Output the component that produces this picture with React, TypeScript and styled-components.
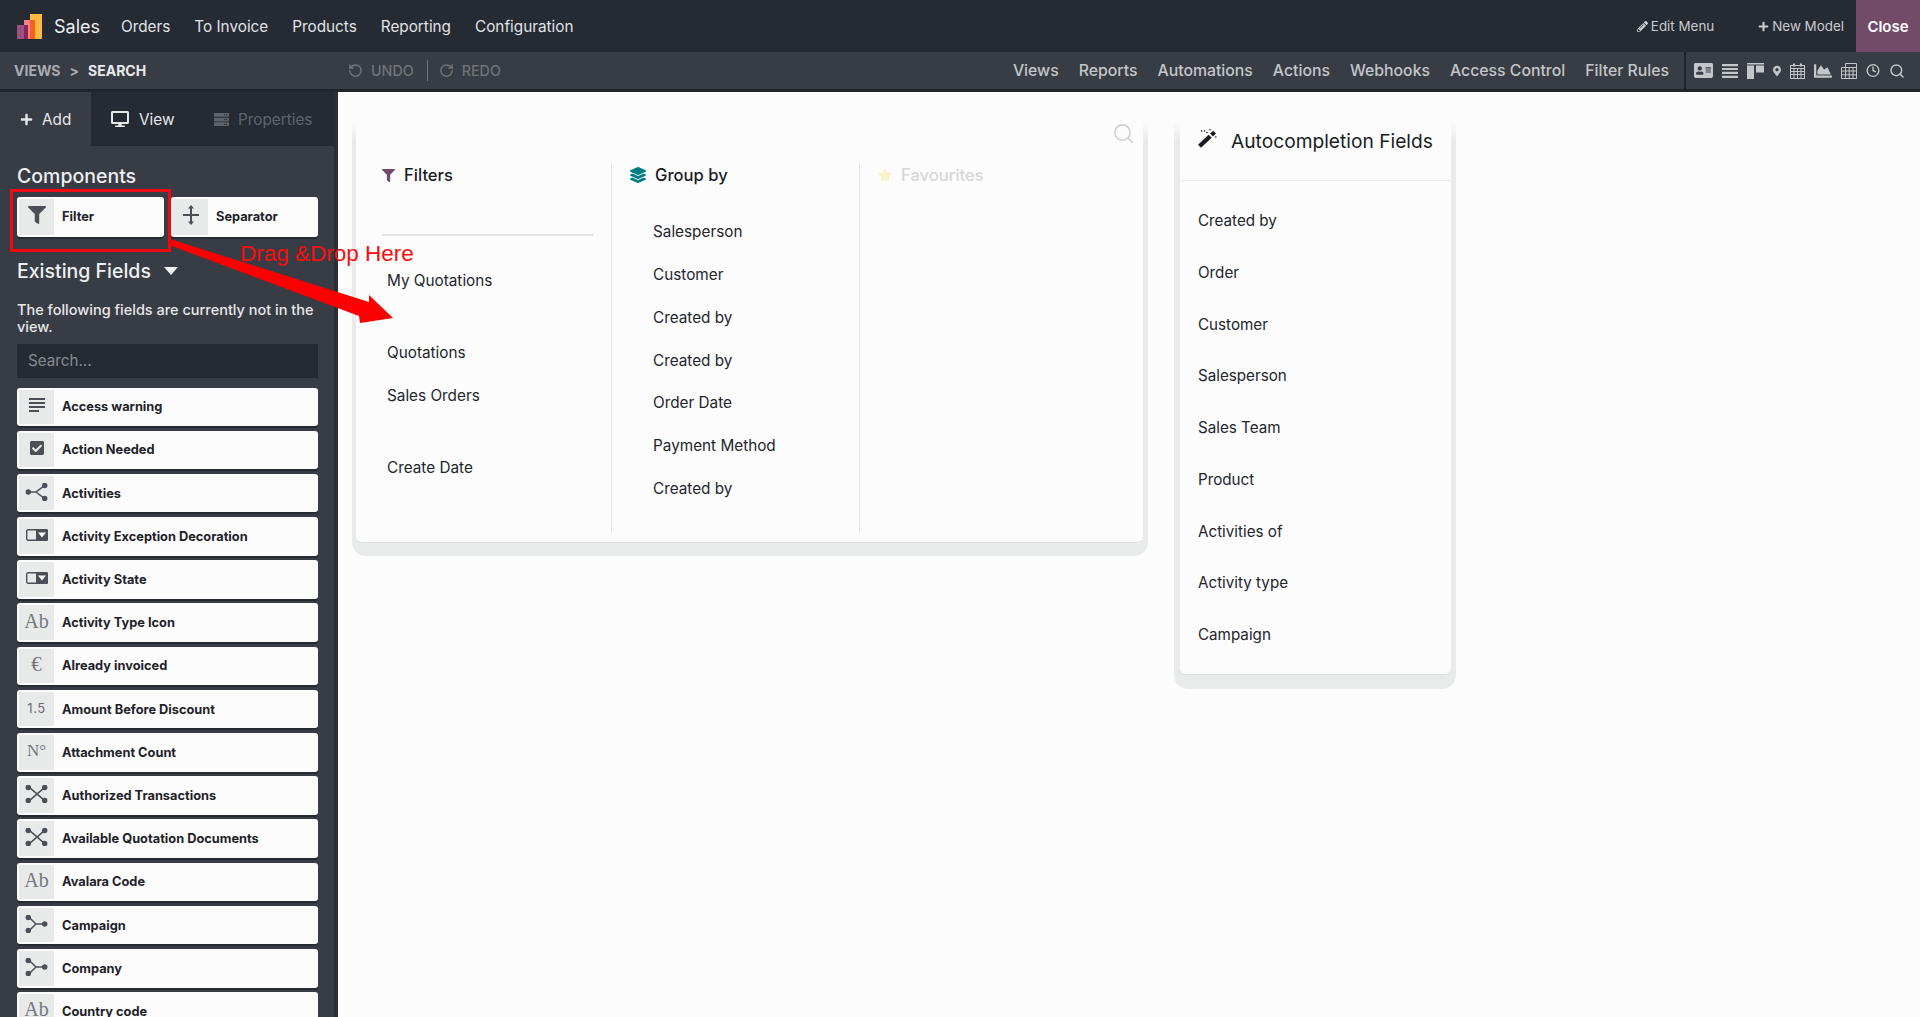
import * as React from 'react';
import styled, { createGlobalStyle } from 'styled-components';
import {
  FaAddressCard, FaCheckSquare, FaChartArea, FaDesktop, FaFilter,
  FaLayerGroup, FaMapMarkerAlt, FaPencilAlt, FaPlus, FaServer, FaStar,
} from 'react-icons/fa';
import { Clock, RotateCcw, RotateCw, Search } from 'lucide-react';

const GlobalStyle = createGlobalStyle`
  html, body { margin: 0; padding: 0; height: 100%; overflow: hidden; }
  body { font-family: Inter, "Noto Sans", sans-serif; background: #fcfcfc; color: #1f2229; }
  * { box-sizing: border-box; }
`;

const Page = styled.div`
  position: relative;
  width: 1920px;
  height: 1017px;
  overflow: hidden;
  display: flex;
  flex-direction: column;
`;

const TopBar = styled.header`
  height: 52px;
  flex: none;
  background: #252a33;
  display: flex;
  align-items: center;
  padding-left: 17px;
  color: #e1e3e6;
`;

const Brand = styled.span`
  font-size: 18px;
  margin: 0 21px 0 12px;
  color: #eceef0;
`;

const MenuLink = styled.span`
  font-size: 15.3px;
  margin-right: 24px;
`;

const Spacer = styled.div`
  flex: 1;
`;

const TopAction = styled.span`
  font-size: 13.4px;
  color: #c9cbcf;
  display: inline-flex;
  align-items: center;
  gap: 3px;
  margin-right: ${p => p.$gap}px;
`;

const CloseButton = styled.div`
  width: 64px;
  height: 52px;
  background: #714b67;
  color: #fff;
  font-size: 15px;
  font-weight: 600;
  display: flex;
  align-items: center;
  justify-content: center;
`;

const SubBar = styled.div`
  height: 40px;
  flex: none;
  background: #383c44;
  border-bottom: 3px solid #20252c;
  display: flex;
  align-items: center;
  padding-left: 14px;
`;

const Crumbs = styled.div`
  width: 334px;
  font-size: 14px;
  font-weight: 700;
  color: #a9acb0;
  display: flex;
  gap: 9px;
`;

const CrumbActive = styled.span`
  color: #e9eaec;
`;

const HistoryButton = styled.span`
  font-size: 14.3px;
  font-weight: 500;
  color: #6f7378;
  display: inline-flex;
  align-items: center;
  gap: 8px;
`;

const HistoryDivider = styled.span`
  width: 1px;
  height: 21px;
  background: #70747a;
  margin: 0 11px 0 13px;
`;

const ViewLink = styled.span`
  font-size: 15.8px;
  font-weight: 500;
  color: #c4c6c9;
  margin-right: 20px;
`;

const ViewIcons = styled.div`
  height: 37px;
  width: 236px;
  border-left: 2px solid #20252c;
  margin-left: -5px;
  display: flex;
  align-items: center;
  gap: 9px;
  padding-left: 8px;
  color: #c4c6c9;
`;

const IconSlot = styled.span`
  width: ${p => p.$w}px;
  flex: none;
  display: flex;
  justify-content: center;
`;

const Body = styled.div`
  flex: 1;
  display: flex;
  min-height: 0;
`;

const Sidebar = styled.aside`
  width: 338px;
  flex: none;
  background: #383c44;
  border-right: 4px solid #2a2e36;
  overflow: hidden;
`;

const Tabs = styled.div`
  height: 54px;
  background: #252a33;
  display: flex;
`;

const Tab = styled.div`
  height: 54px;
  display: flex;
  align-items: center;
  gap: ${p => p.$gap}px;
  font-size: 15.3px;
  padding-left: ${p => p.$left}px;
  width: ${p => p.$width}px;
  background: ${p => (p.$active ? '#383c44' : 'transparent')};
  color: ${p => (p.$muted ? '#5f646b' : '#e6e7e9')};
`;

const SideContent = styled.div`
  padding: 18px 16px 0 17px;
`;

const SectionTitle = styled.h3`
  margin: 0;
  font-size: 19.5px;
  line-height: 24px;
  font-weight: 500;
  color: #eef0f1;
  display: flex;
  align-items: center;
  gap: 13px;
`;

const ComponentRow = styled.div`
  display: flex;
  gap: 7px;
  margin: 9px 0 22px;
`;

const FieldCard = styled.div`
  height: ${p => (p.$tall ? '39.5px' : '38.6px')};
  flex: ${p => (p.$tall ? '1' : 'none')};
  background: #fcfcfc;
  border-radius: 3px;
  padding: 2px;
  display: flex;
  align-items: stretch;
  box-shadow: 0 2px 0 #262a31;
`;

const FieldIcon = styled.div`
  width: 35px;
  flex: none;
  background: #e8eaea;
  color: #4c5056;
  display: flex;
  align-items: center;
  justify-content: center;
  padding-bottom: 3px;
`;

const SerifGlyph = styled.span`
  font-family: "Liberation Serif", serif;
  font-size: ${p => p.$size}px;
  color: #74787d;
`;

const NumberGlyph = styled.span`
  font-size: 13px;
  color: #6b6f74;
  letter-spacing: 0.5px;
`;

const FieldLabel = styled.span`
  font-size: 12.8px;
  font-weight: 700;
  color: #1f2229;
  margin-left: 8px;
  align-self: center;
`;

const HelpText = styled.p`
  margin: 18px 0 9px;
  font-size: 14.5px;
  line-height: 17px;
  font-weight: 500;
  color: #e7e8ea;
`;

const SearchBox = styled.div`
  height: 34px;
  background: #262a33;
  color: #868a8f;
  font-size: 15.2px;
  display: flex;
  align-items: center;
  padding-left: 11px;
  margin-bottom: 10px;
`;

const FieldList = styled.div`
  display: flex;
  flex-direction: column;
  gap: 4.6px;
`;

const Canvas = styled.main`
  flex: 1;
  background: #fcfcfc;
  display: flex;
  align-items: flex-start;
  gap: 26px;
  padding: 28px 0 0 14px;
`;

const Shell = styled.section`
  position: relative;
  width: ${p => p.$width}px;
  padding: ${p => p.$pad};
  background: linear-gradient(to bottom, #fcfcfc 0, #e9ebea 22px);
  border-radius: 0 0 14px 14px;
`;

const Sheet = styled.div`
  background: #fcfcfc;
  border-radius: 0 0 6px 6px;
  border-bottom: 1px solid #dddfde;
`;

const SearchColumns = styled(Sheet)`
  display: flex;
  padding: 44px 0 10px;
`;

const Column = styled.div`
  width: ${p => p.$width}px;
  height: 368px;
  padding-left: ${p => p.$left}px;
  border-right: ${p => (p.$last ? 'none' : '1px solid #e6e7e7')};
`;

const ColumnTitle = styled.div`
  height: 22px;
  display: flex;
  align-items: center;
  gap: ${p => p.$gap}px;
  font-size: 16.6px;
  font-weight: 500;
  color: ${p => (p.$faded ? '#d6d7d8' : '#1a1d24')};
`;

const FilterRule = styled.div`
  width: 211px;
  height: 2px;
  background: #e4e5e5;
  margin: 48px 0 23px;
`;

const GroupList = styled.div`
  margin-top: 25px;
`;

const Item = styled.div`
  height: ${p => (p.$dense ? 42.85 : 43)}px;
  line-height: ${p => (p.$dense ? 42.85 : 43)}px;
  font-size: 15.3px;
  color: #23262d;
  padding-left: ${p => p.$indent}px;
  margin-top: ${p => p.$top || 0}px;
`;

const ColumnSearch = styled.div`
  position: absolute;
  top: 2px;
  right: 13px;
  color: #cfcfcf;
`;

const AutoHeader = styled.div`
  height: 61px;
  border-bottom: 1px solid #e8eaea;
  padding: 9px 0 0 18px;
  display: flex;
  align-items: flex-start;
  gap: 14px;
  font-size: 19.2px;
  line-height: 24px;
  color: #1a1d24;
`;

const AutoList = styled.div`
  padding: 14px 0 13px 18px;
`;

const AutoItem = styled.div`
  height: 51.75px;
  line-height: 51.75px;
  font-size: 15.2px;
  color: #23262d;
`;

const Annotation = styled.div`
  position: absolute;
  left: 240px;
  top: 241px;
  font-family: "Liberation Sans", Arial, sans-serif;
  font-size: 22.5px;
  line-height: 26px;
  color: #fb0d0d;
  white-space: nowrap;
`;

const HighlightBox = styled.div`
  position: absolute;
  left: 10px;
  top: 189px;
  width: 161px;
  height: 63px;
  border: 3px solid #f2080f;
`;

const ArrowLayer = styled.svg`
  position: absolute;
  left: 0;
  top: 0;
  pointer-events: none;
`;

const Logo = () => (
  <svg width="25" height="25" viewBox="17 13 25 25">
    <path d="M30 13h12v25H30z" fill="#fdb940" />
    <path d="M24 19h11v19H24z" fill="#f9808a" />
    <path d="M30 19h5v19h-5z" fill="#f5621f" />
    <path d="M17 24h11v14H17z" fill="#9b4f83" />
    <path d="M24 24h4v14h-4z" fill="#8c2450" />
  </svg>
);

const TextLines = () => (
  <svg width="18" height="15" viewBox="0 0 18 15" fill="#4c5056">
    <path d="M1 0h16v2H1zM1 4h16v2H1zM1 8h16v2H1zM1 12h10v2H1z" />
  </svg>
);

const Nodes = ({ kind }: { kind: string }) => {
  const lines: Record<string, string> = {
    o2m: 'M4 8H10L18 2M10 8L18 14',
    m2o: 'M4 2L10 8H18M4 14L10 8',
    m2m: 'M4 2L18 14M18 2L4 14',
  };
  const dots: Record<string, number[][]> = {
    o2m: [[3, 8], [18, 2], [18, 14]],
    m2o: [[3, 2], [3, 14], [18, 8]],
    m2m: [[3, 2], [18, 2], [3, 14], [18, 14]],
  };
  return (
    <svg width="23" height="18" viewBox="0 0 21 16" fill="none" stroke="#4c5056" strokeWidth="1.4">
      <path d={lines[kind]} />
      {dots[kind].map(([x, y]) => (
        <circle key={`${x}-${y}`} cx={x} cy={y} r="2.5" fill="#4c5056" stroke="none" />
      ))}
    </svg>
  );
};

const SelectionIcon = () => (
  <svg width="22" height="12" viewBox="0 0 22 12">
    <rect x="0.7" y="0.7" width="20.6" height="10.6" rx="1.5" fill="none" stroke="#4c5056" strokeWidth="1.4" />
    <path d="M10 0h10.5a1.5 1.5 0 0 1 1.5 1.5v9a1.5 1.5 0 0 1-1.5 1.5H10z" fill="#4c5056" />
    <path d="M12 3.5h8L16 8.5z" fill="#fcfcfc" />
  </svg>
);

const SeparatorIcon = () => (
  <svg width="16" height="20" viewBox="0 0 16 20" fill="#4c5056">
    <path d="M0 9h16v2H0zM7 3h2v14H7zM8 0l3 3.5H5zM8 20l-3-3.5h6z" />
  </svg>
);

const ListIcon = () => (
  <svg width="16" height="14" viewBox="0 0 16 14" fill="#c4c6c9">
    <path d="M0 0h16v2.2H0zM0 3.9h16v2.2H0zM0 7.8h16v2.2H0zM0 11.8h16V14H0z" />
  </svg>
);

const KanbanIcon = () => (
  <svg width="17" height="16" viewBox="0 0 17 16" fill="#c4c6c9">
    <path d="M0 0h17v1.4H0zM0 2.4h7V16H0zM9 2.4h8v7H9z" />
  </svg>
);

const CalendarIcon = () => (
  <svg width="15" height="16" viewBox="0 0 15 16" fill="none" stroke="#c4c6c9" strokeWidth="1">
    <rect x="0.5" y="2.5" width="14" height="13" />
    <path d="M0.5 5.5h14M0.5 8.5h14M0.5 11.5h14M4 5.5v10M7.5 5.5v10M11 5.5v10" />
    <path d="M4 0.5v3M11 0.5v3" strokeWidth="2" />
  </svg>
);

const SheetIcon = () => (
  <svg width="16" height="16" viewBox="0 0 16 16" fill="none" stroke="#c4c6c9" strokeWidth="1">
    <path d="M4.5 0.5h11v15H0.5V4.5h4z" />
    <path d="M0.5 8h15M0.5 11.8h15M4.5 4.5h11M4.5 4.5v11M8.2 4.5v11M12 4.5v11" />
  </svg>
);

const WandIcon = () => (
  <svg width="19" height="19" viewBox="0 0 19 19" fill="#1a1d24">
    <path d="M0 15.8L10.6 5.8L13.7 8.8L3 18.8z" />
    <path d="M12 4.6L15.2 1.8L18 4.6L15 7.6z" />
    <circle cx="3.5" cy="2" r="0.8" />
    <circle cx="6.5" cy="2" r="0.8" />
    <circle cx="9" cy="3.5" r="0.8" />
    <circle cx="12" cy="0.8" r="0.8" />
    <circle cx="17.8" cy="8" r="0.8" />
  </svg>
);

const fieldIcons: Record<string, React.ReactNode> = {
  text: <TextLines />,
  check: <FaCheckSquare size={16} />,
  o2m: <Nodes kind="o2m" />,
  select: <SelectionIcon />,
  char: <SerifGlyph $size={20}>Ab</SerifGlyph>,
  euro: <SerifGlyph $size={21}>€</SerifGlyph>,
  num: <NumberGlyph>1.5</NumberGlyph>,
  count: <SerifGlyph $size={17}>N°</SerifGlyph>,
  m2m: <Nodes kind="m2m" />,
  m2o: <Nodes kind="m2o" />,
};

const fields: [string, string][] = [
  ['text', 'Access warning'],
  ['check', 'Action Needed'],
  ['o2m', 'Activities'],
  ['select', 'Activity Exception Decoration'],
  ['select', 'Activity State'],
  ['char', 'Activity Type Icon'],
  ['euro', 'Already invoiced'],
  ['num', 'Amount Before Discount'],
  ['count', 'Attachment Count'],
  ['m2m', 'Authorized Transactions'],
  ['m2m', 'Available Quotation Documents'],
  ['char', 'Avalara Code'],
  ['m2o', 'Campaign'],
  ['m2o', 'Company'],
  ['char', 'Country code'],
];

const menu = ['Orders', 'To Invoice', 'Products', 'Reporting', 'Configuration'];
const viewLinks = ['Views', 'Reports', 'Automations', 'Actions', 'Webhooks', 'Access Control', 'Filter Rules'];
const groupItems = ['Salesperson', 'Customer', 'Created by', 'Created by', 'Order Date', 'Payment Method', 'Created by'];
const autoItems = ['Created by', 'Order', 'Customer', 'Salesperson', 'Sales Team', 'Product', 'Activities of', 'Activity type', 'Campaign'];

export default function App() {
  return (
    <Page>
      <GlobalStyle />
      <TopBar>
        <Logo />
        <Brand>Sales</Brand>
        {menu.map(m => <MenuLink key={m}>{m}</MenuLink>)}
        <Spacer />
        <TopAction $gap={44}><FaPencilAlt size={11} />Edit Menu</TopAction>
        <TopAction $gap={12}><FaPlus size={11} />New Model</TopAction>
        <CloseButton>Close</CloseButton>
      </TopBar>

      <SubBar>
        <Crumbs>
          <span>VIEWS</span>
          <span>&gt;</span>
          <CrumbActive>SEARCH</CrumbActive>
        </Crumbs>
        <HistoryButton><RotateCcw size={15} strokeWidth={2.4} />UNDO</HistoryButton>
        <HistoryDivider />
        <HistoryButton><RotateCw size={15} strokeWidth={2.4} />REDO</HistoryButton>
        <Spacer />
        {viewLinks.map(v => <ViewLink key={v}>{v}</ViewLink>)}
        <ViewIcons>
          <IconSlot $w={19}><FaAddressCard size={19} /></IconSlot>
          <ListIcon />
          <KanbanIcon />
          <IconSlot $w={8}><FaMapMarkerAlt size={14} /></IconSlot>
          <CalendarIcon />
          <IconSlot $w={18}><FaChartArea size={18} /></IconSlot>
          <SheetIcon />
          <IconSlot $w={14}><Clock size={15} strokeWidth={2.4} /></IconSlot>
          <IconSlot $w={16}><Search size={18} strokeWidth={2.2} /></IconSlot>
        </ViewIcons>
      </SubBar>

      <Body>
        <Sidebar>
          <Tabs>
            <Tab $active $left={20} $width={91} $gap={9}><FaPlus size={13} />Add</Tab>
            <Tab $left={20} $width={103} $gap={10}><FaDesktop size={18} />View</Tab>
            <Tab $muted $left={20} $width={140} $gap={9}><FaServer size={15} />Properties</Tab>
          </Tabs>
          <SideContent>
            <SectionTitle>Components</SectionTitle>
            <ComponentRow>
              <FieldCard $tall>
                <FieldIcon><FaFilter size={18} /></FieldIcon>
                <FieldLabel>Filter</FieldLabel>
              </FieldCard>
              <FieldCard $tall>
                <FieldIcon><SeparatorIcon /></FieldIcon>
                <FieldLabel>Separator</FieldLabel>
              </FieldCard>
            </ComponentRow>
            <SectionTitle>
              Existing Fields
              <svg width="14" height="8" viewBox="0 0 14 8" fill="#eef0f1"><path d="M0 0h14L7 8z" /></svg>
            </SectionTitle>
            <HelpText>The following fields are currently not in the view.</HelpText>
            <SearchBox>Search...</SearchBox>
            <FieldList>
              {fields.map(([icon, label]) => (
                <FieldCard key={label}>
                  <FieldIcon>{fieldIcons[icon]}</FieldIcon>
                  <FieldLabel>{label}</FieldLabel>
                </FieldCard>
              ))}
            </FieldList>
          </SideContent>
        </Sidebar>

        <Canvas>
          <Shell $width={796} $pad="0 5px 13px 4px">
            <ColumnSearch><Search size={23} strokeWidth={1.6} /></ColumnSearch>
            <SearchColumns>
              <Column $width={256} $left={26}>
                <ColumnTitle $gap={9}>
                  <FaFilter size={13} color="#714b67" />
                  Filters
                </ColumnTitle>
                <FilterRule />
                <Item $indent={5}>My Quotations</Item>
                <Item $indent={5} $top={29}>Quotations</Item>
                <Item $indent={5}>Sales Orders</Item>
                <Item $indent={5} $top={29}>Create Date</Item>
              </Column>
              <Column $width={248} $left={18}>
                <ColumnTitle $gap={9}>
                  <FaLayerGroup size={16} color="#017e84" />
                  Group by
                </ColumnTitle>
                <GroupList>
                  {groupItems.map((g, i) => <Item key={`${g}-${i}`} $dense $indent={23}>{g}</Item>)}
                </GroupList>
              </Column>
              <Column $width={280} $left={18} $last>
                <ColumnTitle $gap={9} $faded>
                  <FaStar size={14} color="#fbf3c8" />
                  Favourites
                </ColumnTitle>
              </Column>
            </SearchColumns>
          </Shell>

          <Shell $width={282} $pad="0 5px 14px 6px">
            <Sheet>
              <AutoHeader>
                <WandIcon />
                Autocompletion Fields
              </AutoHeader>
              <AutoList>
                {autoItems.map(a => <AutoItem key={a}>{a}</AutoItem>)}
              </AutoList>
            </Sheet>
          </Shell>
        </Canvas>
      </Body>

      <HighlightBox />
      <Annotation>Drag &amp;Drop Here</Annotation>
      <ArrowLayer width="420" height="340" viewBox="0 0 420 340">
        <polygon points="170,239 369,302 369,295 393,318 360,323 359,316 169,245" fill="#fb0000" />
      </ArrowLayer>
    </Page>
  );
}
